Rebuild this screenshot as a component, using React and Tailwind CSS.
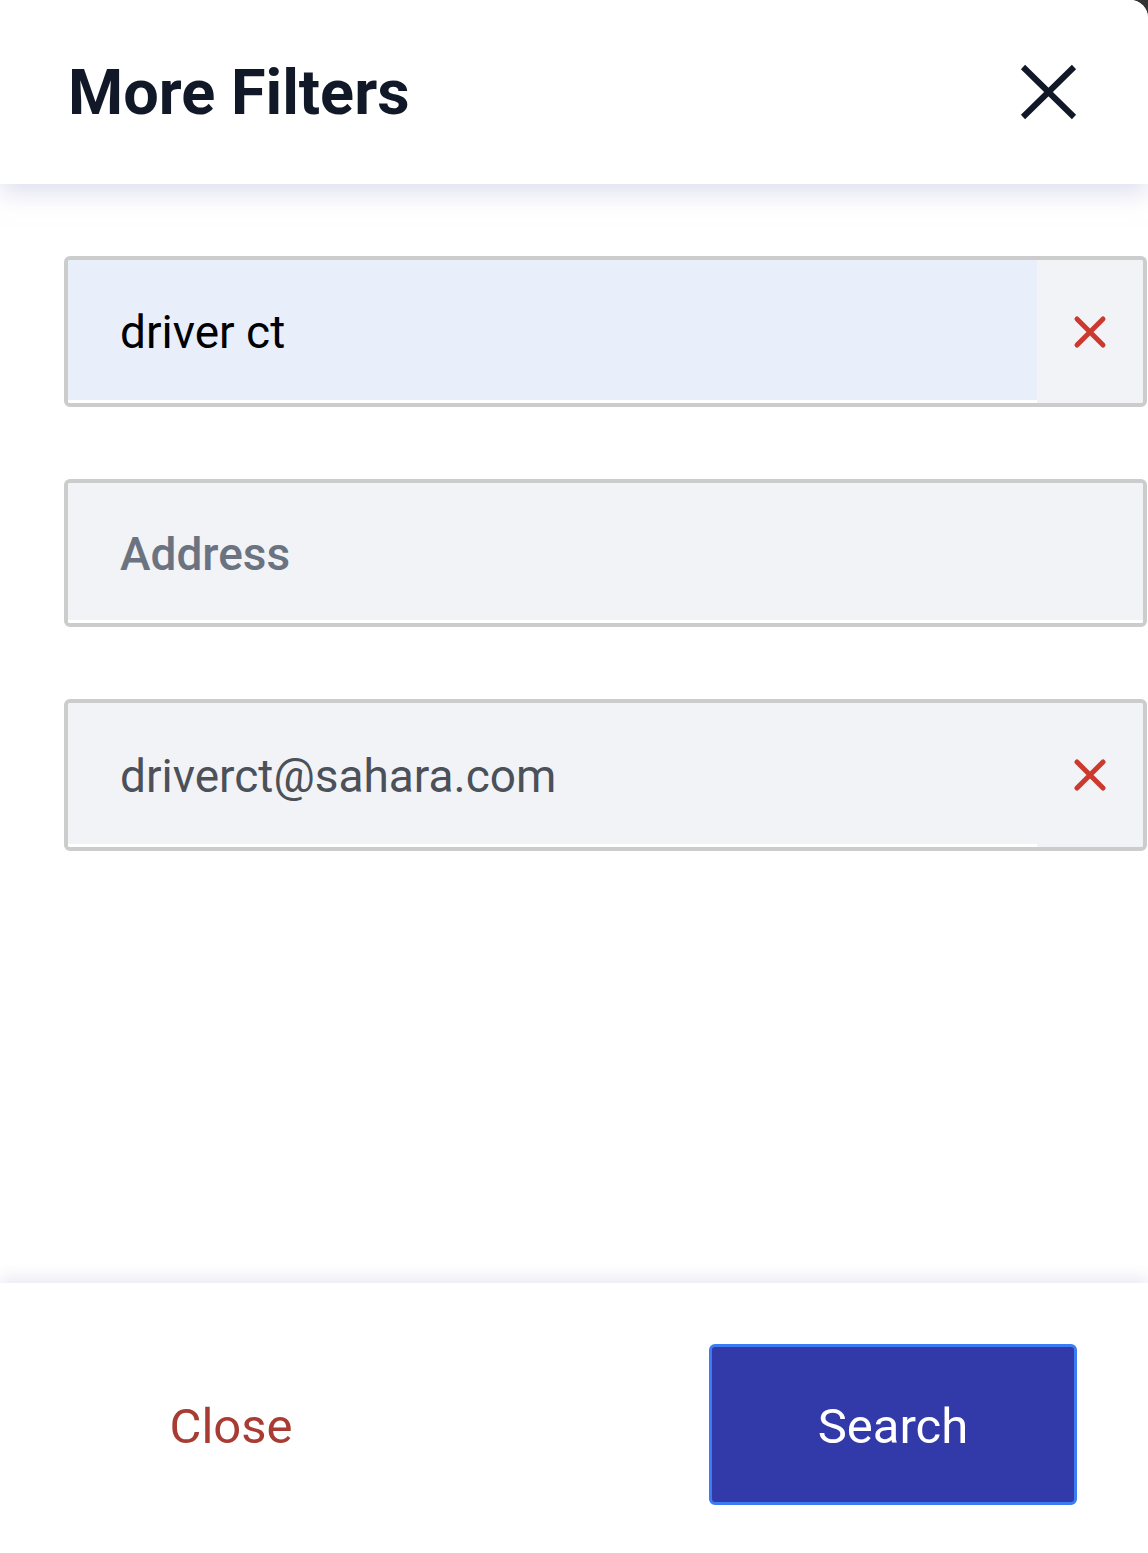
const ClearButton = () => (
  <button className="flex h-full w-[106px] shrink-0 items-center justify-center bg-[#f2f3f7]">
    <svg width="34" height="34" viewBox="0 0 34 34" fill="none">
      <path d="M4 4L30 30M30 4L4 30" stroke="#cc3a2f" strokeWidth="5" strokeLinecap="round" />
    </svg>
  </button>
);

const Field = ({ value, placeholder, height, inputBg, textColor, clearable }) => (
  <div
    className="flex w-full overflow-hidden rounded-[6px] border-4 border-[#cccccc] bg-[#f2f3f7]"
    style={{ height }}
  >
    <div className={`flex min-w-0 flex-1 items-center border-b-[3px] border-white pl-[52px] pt-[4px] ${inputBg}`}>
      {value ? (
        <span className={`text-[46px] leading-none ${textColor}`}>{value}</span>
      ) : (
        <span className="text-[46px] font-medium leading-none text-[#6b7280]">{placeholder}</span>
      )}
    </div>
    {clearable && <ClearButton />}
  </div>
);

export default function App() {
  return (
    <div className="h-[1553px] w-[1148px] bg-[#333333] font-['Roboto',sans-serif]">
      <div className="flex h-full flex-col overflow-hidden rounded-tr-[18px] bg-white">
        <header className="relative z-10 flex h-[184px] shrink-0 items-center justify-between bg-white pl-[68px] pr-[71px] shadow-[0_10px_22px_rgba(200,200,228,0.55)]">
          <h1 className="text-[63px] font-bold leading-none text-[#111827]">More Filters</h1>
          <button className="flex h-[56px] w-[58px] items-center justify-center">
            <svg width="58" height="56" viewBox="0 0 58 56" fill="none">
              <path d="M4 3L55 53M55 3L4 53" stroke="#111827" strokeWidth="6" />
            </svg>
          </button>
        </header>

        <main className="flex flex-col gap-[72px] pl-[64px] pr-px pt-[72px]">
          <Field value="driver ct" height={151} inputBg="bg-[#e8effb]" textColor="text-black" clearable />
          <Field placeholder="Address" height={148} inputBg="bg-[#f2f3f7] border-b-0" />
          <Field value="driverct@sahara.com" height={152} inputBg="bg-[#f2f3f7]" textColor="text-[#4b5059]" clearable />
        </main>

        <div className="flex-1" />

        <footer className="flex h-[270px] shrink-0 items-start justify-between bg-white pl-[47px] pr-[71px] pt-[61px] shadow-[0_-6px_14px_rgba(220,220,236,0.6)]">
          <button className="flex h-[161px] w-[368px] items-center justify-center pt-[4px] text-[49px] leading-none text-[#a83c32]">
            Close
          </button>
          <button className="flex h-[161px] w-[368px] items-center justify-center rounded-[6px] border-[3px] border-[#3b7cf5] bg-[#3239a8] pt-[4px] text-[49px] leading-none text-white">
            Search
          </button>
        </footer>
      </div>
    </div>
  );
}
